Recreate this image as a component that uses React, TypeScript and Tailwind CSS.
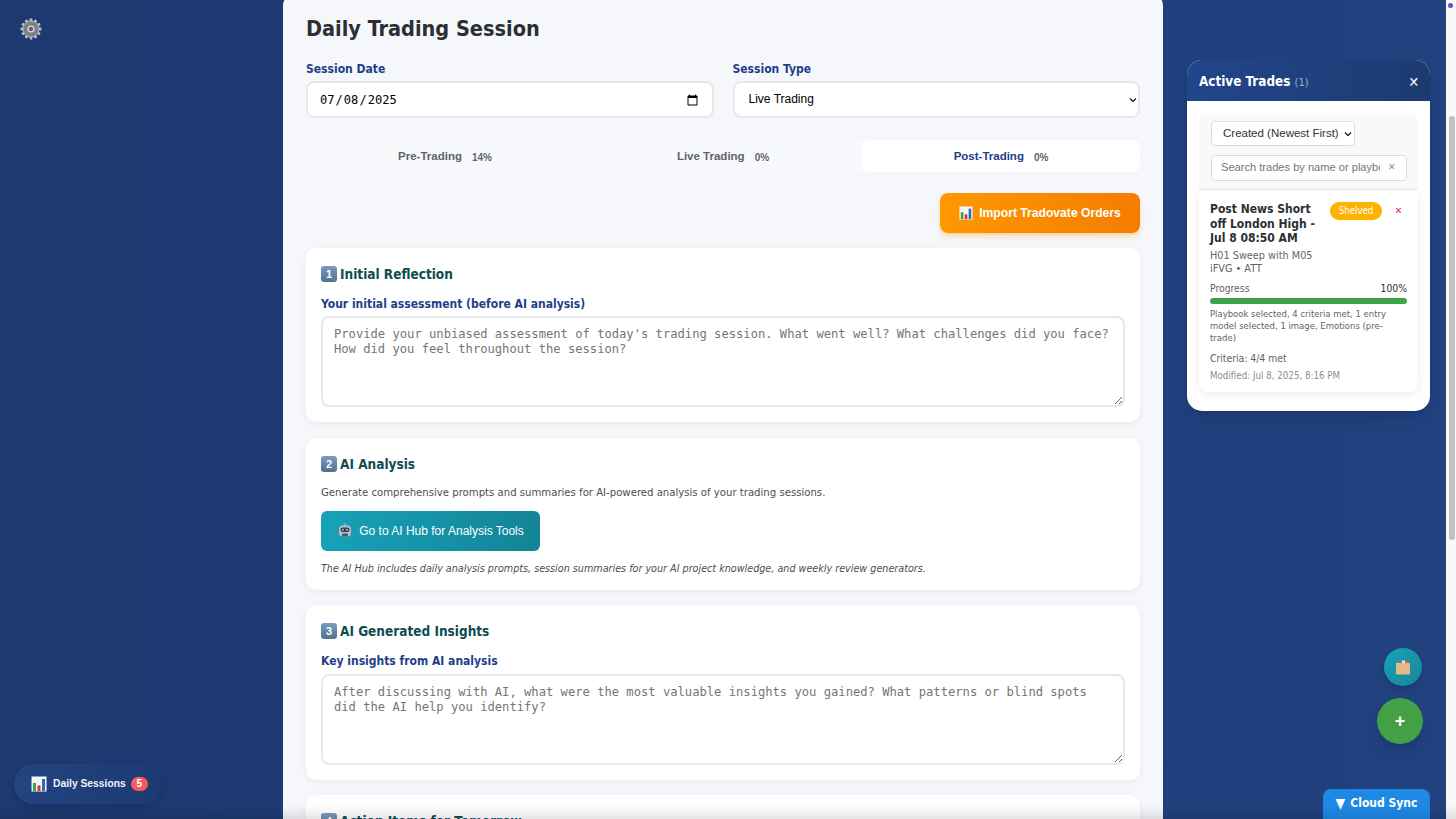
const BarsIcon = ({ size = 16 }: { size?: number }) => (
    <svg width={size} height={size} viewBox="0 0 16 16" className="shrink-0">
        <rect x="0.5" y="0.5" width="15" height="15" fill="#f4f6f8" />
        <rect x="2" y="7" width="3" height="8" fill="#3fa34d" />
        <rect x="6.5" y="9.5" width="3" height="5.5" fill="#d9342b" />
        <rect x="11" y="3" width="3" height="12" fill="#2a6db5" />
    </svg>
)

const GearIcon = () => (
    <svg width="22" height="22" viewBox="0 0 22 22">
        <g fill="#b9c2cc">
            {[0, 30, 60, 90, 120, 150, 180, 210, 240, 270, 300, 330].map((deg) => (
                <rect key={deg} x="9.6" y="0.6" width="2.8" height="4" rx="0.6" transform={`rotate(${deg} 11 11)`} />
            ))}
        </g>
        <circle cx="11" cy="11" r="8" fill="#7d8186" stroke="#aab2ba" strokeWidth="1" />
        <circle cx="11" cy="11" r="3.6" fill="#d6dbe0" />
        <circle cx="11" cy="11" r="2.2" fill="#5d6166" />
    </svg>
)

const RobotIcon = () => (
    <svg width="16" height="16" viewBox="0 0 16 16" className="shrink-0">
        <rect x="7.3" y="0.5" width="1.4" height="2.5" fill="#a8b4bd" />
        <rect x="0.5" y="6.5" width="2" height="4" rx="1" fill="#6f7f8a" />
        <rect x="13.5" y="6.5" width="2" height="4" rx="1" fill="#6f7f8a" />
        <rect x="2" y="2.5" width="12" height="11" rx="3.5" fill="#b5c1c9" />
        <rect x="3.5" y="4.5" width="9" height="4.5" rx="2" fill="#33414b" />
        <circle cx="6" cy="6.7" r="1" fill="#7fd4f0" />
        <circle cx="10" cy="6.7" r="1" fill="#7fd4f0" />
        <rect x="5" y="10.5" width="6" height="3" rx="1" fill="#4c5a64" />
    </svg>
)

const BoxIcon = () => (
    <svg width="16" height="16" viewBox="0 0 16 16">
        <rect x="3" y="1" width="4" height="4" fill="#4d82c4" />
        <rect x="7" y="1.5" width="3" height="3" fill="#e8e8e8" />
        <rect x="10" y="2" width="3.5" height="3" fill="#d9534f" />
        <path d="M1 4h14v10.5a1 1 0 0 1-1 1H2a1 1 0 0 1-1-1z" fill="#e3b985" />
    </svg>
)

const Chevron = ({ right }: { right: string }) => (
    <svg width="8" height="5" viewBox="0 0 8 5" className={`absolute top-1/2 -translate-y-1/2 pointer-events-none ${right}`}>
        <path d="M1 1l3 3 3-3" fill="none" stroke="#222" strokeWidth="1.4" />
    </svg>
)

const Keycap = ({ n }: { n: number }) => (
    <span className="w-4 h-4 shrink-0 rounded-[3px] bg-gradient-to-b from-[#7b9cc0] to-[#51718f] text-white text-[11px] leading-4 font-bold text-center font-['Liberation_Sans',sans-serif]">
        {n}
    </span>
)

const CardTitle = ({ n, title }: { n: number; title: string }) => (
    <h3 className="flex items-center gap-[3px] h-[20px] text-[13.5px] font-bold text-[#0f4c4f]">
        <Keycap n={n} />
        {title}
    </h3>
)

const fieldLabel = "block text-[12px] font-bold text-[#1e4088]"
const noteArea = "block w-full h-[91px] px-[11px] pt-[9px] bg-white border-2 border-[#e6e8eb] rounded-lg font-['DejaVu_Sans_Mono',monospace] text-[12.15px] leading-[14.6px] placeholder:text-[#757575]"
const cardShadow = "bg-white rounded-[10px] shadow-[0_2px_8px_rgba(0,0,0,0.05)]"

const App = () => {
    const tabs = [
        { id: 1, name: "Pre-Trading", pct: "14%" },
        { id: 2, name: "Live Trading", pct: "0%" },
        { id: 3, name: "Post-Trading", pct: "0%" },
    ]

    return (
        <div className="relative flex h-screen overflow-hidden bg-gradient-to-r from-[#1d3970] to-[#21417f] font-['DejaVu_Sans_Condensed','DejaVu_Sans',sans-serif]">

            <aside className="w-[283px] shrink-0 flex flex-col justify-between pl-[14px] pt-[18px] pb-[15px]">
                <div className="pl-[6px]">
                    <GearIcon />
                </div>
                <div className="flex items-center w-[148px] h-[40px] pl-[17px] rounded-full bg-gradient-to-r from-[#234480] to-[#1c3a72] shadow-md shadow-[#17305f]/50 font-['Liberation_Sans',sans-serif]">
                    <BarsIcon />
                    <span className="ml-[6px] text-[10.3px] font-bold text-[#eef2f8]">Daily Sessions</span>
                    <span className="ml-[5px] w-[17px] h-[14px] rounded-full bg-[#f25c5c] text-white text-[10px] leading-[14px] font-bold text-center">5</span>
                </div>
            </aside>

            <main className="w-[880px] shrink-0 h-[860px] -mt-2 px-[23px] pt-[16px] bg-[#f5f7fb] rounded-[14px]">
                <h2 className="h-[42px] flex items-center text-[21.5px] font-bold text-[#2b2f33]">Daily Trading Session</h2>

                <div className="grid grid-cols-2 gap-[19px] mt-[10px]">
                    <div>
                        <label className={fieldLabel}>Session Date</label>
                        <input
                            type="date"
                            defaultValue="2025-07-08"
                            className="block w-full h-[37px] mt-[3px] pl-[11px] pr-[11px] pt-px bg-white border-2 border-[#e6e8eb] rounded-lg font-['DejaVu_Sans_Mono',monospace] text-[12.1px]"
                        />
                    </div>
                    <div>
                        <label className={fieldLabel}>Session Type</label>
                        <div className="relative mt-[3px]">
                            <select className="block w-full h-[37px] pl-[14px] pr-6 pb-px appearance-none bg-white border-2 border-[#e6e8eb] rounded-lg font-['Liberation_Sans',sans-serif] text-[12px]">
                                <option>Live Trading</option>
                            </select>
                            <Chevron right="right-[3px]" />
                        </div>
                    </div>
                </div>

                <div className="grid grid-cols-3 h-[32px] mt-[22px] rounded-lg bg-[#f7f9fc] font-['Liberation_Sans',sans-serif]">
                    {tabs.map((tab) => (
                        <div
                            key={tab.id}
                            className={tab.id === 3
                                ? "flex items-center justify-center gap-[10px] pt-[2px] rounded-lg bg-white"
                                : "flex items-center justify-center gap-[10px] pt-[2px] rounded-lg"}
                        >
                            <span className={tab.id === 3 ? "text-[11.5px] font-bold text-[#1e4088]" : "text-[11.5px] font-bold text-[#5f6468]"}>{tab.name}</span>
                            <span className="text-[10px] font-bold text-[#5f6468]">{tab.pct}</span>
                        </div>
                    ))}
                </div>

                <div className="flex justify-end mt-[21px]">
                    <button className="flex items-center justify-center gap-[6px] w-[200px] h-[40px] rounded-lg bg-gradient-to-r from-[#ff9800] to-[#f57c00] shadow-md shadow-[#ff9800]/30 text-white text-[12.15px] font-bold font-['Liberation_Sans',sans-serif]">
                        <BarsIcon size={14} />
                        Import Tradovate Orders
                    </button>
                </div>

                <section className={`h-[174px] mt-[15px] px-[15px] pt-4 ${cardShadow}`}>
                    <CardTitle n={1} title="Initial Reflection" />
                    <label className={`${fieldLabel} mt-[11px] mb-[3px]`}>Your initial assessment (before AI analysis)</label>
                    <textarea
                        readOnly
                        className={noteArea}
                        placeholder="Provide your unbiased assessment of today's trading session. What went well? What challenges did you face? How did you feel throughout the session?"
                    />
                </section>

                <section className={`h-[152px] mt-[16px] px-[15px] pt-4 ${cardShadow}`}>
                    <CardTitle n={2} title="AI Analysis" />
                    <p className="mt-[11px] text-[11.25px] text-[#4a4f54]">Generate comprehensive prompts and summaries for AI-powered analysis of your trading sessions.</p>
                    <button className="flex items-center justify-center gap-[6px] w-[219px] h-[40px] mt-[9px] rounded-md bg-gradient-to-r from-[#17a2b8] to-[#138496] text-white text-[12px] font-['Liberation_Sans',sans-serif]">
                        <RobotIcon />
                        Go to AI Hub for Analysis Tools
                    </button>
                    <p className="mt-[10px] text-[10.7px] italic text-[#4a4f54]">The AI Hub includes daily analysis prompts, session summaries for your AI project knowledge, and weekly review generators.</p>
                </section>

                <section className={`h-[175px] mt-[15px] px-[15px] pt-4 ${cardShadow}`}>
                    <CardTitle n={3} title="AI Generated Insights" />
                    <label className={`${fieldLabel} mt-[11px] mb-[4px]`}>Key insights from AI analysis</label>
                    <textarea
                        readOnly
                        className={noteArea}
                        placeholder="After discussing with AI, what were the most valuable insights you gained? What patterns or blind spots did the AI help you identify?"
                    />
                </section>

                <section className={`h-[120px] mt-[15px] px-[15px] pt-4 ${cardShadow}`}>
                    <CardTitle n={4} title="Action Items for Tomorrow" />
                </section>
            </main>

            <aside className="flex-1 flex flex-col items-end pt-[60px] pr-[16px]">
                <div className="w-[243px] rounded-[15px] overflow-hidden bg-white shadow-lg">
                    <div className="flex items-center justify-between h-[41px] pl-3 pr-[11px] pt-[3px] bg-gradient-to-r from-[#22468c] to-[#1d3a70]">
                        <h3 className="text-[13.4px] font-bold text-white">
                            Active Trades <span className="text-[11px] font-normal text-[#9fb0cc]">(1)</span>
                        </h3>
                        <span className="text-[14px] font-bold text-white">✕</span>
                    </div>
                    <div className="px-3 pt-3 pb-[19px]">
                        <div className="h-[77px] pt-2 px-3 bg-[#f8f9fa] rounded-t-lg border-b border-[#e9ecef] font-['Liberation_Sans',sans-serif]">
                            <div className="relative w-[144px]">
                                <select className="block w-full h-[25px] pl-[11px] pr-4 appearance-none bg-white border border-[#d9dde2] rounded text-[11.5px] text-[#333]">
                                    <option>Created (Newest First)</option>
                                </select>
                                <Chevron right="right-[3px]" />
                            </div>
                            <div className="flex items-center justify-between w-[196px] h-[26px] mt-[9px] pl-[9px] pr-[10px] pb-px bg-white border border-[#d9dde2] rounded">
                                <input
                                    readOnly
                                    className="w-[159px] text-[11.1px] placeholder:text-[#757575]"
                                    placeholder="Search trades by name or playbook"
                                />
                                <span className="text-[9px] text-[#888]">✕</span>
                            </div>
                        </div>
                        <div className="px-[11px] pt-3 pb-[10px] bg-white rounded-b-lg shadow-[0_2px_8px_rgba(0,0,0,0.08)]">
                            <div className="flex items-start justify-between">
                                <h4 className="w-[112px] text-[12px] leading-[14.5px] font-bold text-[#2b2f33]">Post News Short off London High - Jul 8 08:50 AM</h4>
                                <span className="ml-[8px] w-[52px] h-[18px] rounded-full bg-[#ffb300] text-white text-[9.6px] leading-[18px] text-center">Shelved</span>
                                <span className="w-[25px] pl-2 text-[10px] leading-[18px] text-center font-bold text-[#dc3545]">✕</span>
                            </div>
                            <p className="mt-[3px] text-[10.8px] leading-[13px] text-[#5f6468]">H01 Sweep with M05<br />iFVG • ATT</p>
                            <div className="flex justify-between mt-[6px] text-[10.3px] leading-[14px] text-[#5f6468]">
                                <span>Progress</span>
                                <span className="text-[#333]">100%</span>
                            </div>
                            <div className="h-[6px] mt-[3px] rounded-full bg-[#3da548]" />
                            <p className="mt-[4px] text-[9.45px] leading-[12px] text-[#5f6468]">Playbook selected, 4 criteria met, 1 entry model selected, 1 image, Emotions (pre-trade)</p>
                            <p className="mt-[7px] text-[10.3px] leading-[14px] text-[#5f6468]">Criteria: 4/4 met</p>
                            <p className="mt-[4px] text-[9.7px] leading-[13px] text-[#8a8f94]">Modified: Jul 8, 2025, 8:16 PM</p>
                        </div>
                    </div>
                </div>

                <div className="flex-1 flex flex-col items-end justify-end w-full">
                    <button className="flex items-center justify-center w-[38px] h-[38px] mr-[8px] rounded-full bg-gradient-to-br from-[#17a2b8] to-[#17869a] shadow-md">
                        <BoxIcon />
                    </button>
                    <button className="flex items-center justify-center w-[46px] h-[46px] mt-[12px] mr-[7px] rounded-full bg-[#43a047] shadow-lg text-white text-[18px] font-bold font-['Liberation_Sans',sans-serif]">+</button>
                    <div className="flex items-center justify-center gap-[5px] w-[107px] h-[30px] pb-[2px] mt-[45px] rounded-t-lg bg-[#1e88e5] text-white text-[12px] font-bold">
                        <span className="text-[14px] leading-none">▼</span>
                        Cloud Sync
                    </div>
                </div>
            </aside>

            <div className="w-[10px] shrink-0 relative bg-[#f8f9fa]">
                <span className="absolute top-[3px] left-[2px] w-[5px] h-[5px] rounded-full bg-[#5b4de0]" />
                <div className="w-[6px] h-[424px] mt-[116px] ml-[3px] rounded-full bg-[#c1c1c1]" />
            </div>

            <div className="absolute inset-x-0 bottom-0 h-[14px] bg-gradient-to-t from-black/10 to-transparent pointer-events-none" />
        </div>
    )
}

export default App
